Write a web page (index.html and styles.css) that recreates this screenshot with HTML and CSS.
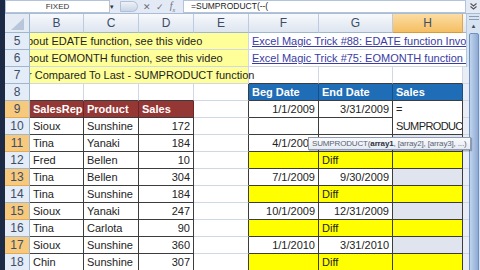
FILE: index.html
```
<!DOCTYPE html>
<html lang="en">
<head>
    <meta charset="UTF-8">
    <meta name="viewport" content="width=device-width, initial-scale=1.0">
    <title>SUMPRODUCT - sales by quarter</title>
    <link rel="stylesheet" href="styles.css">
</head>
<body>
<div class="app">
    <!-- formula bar -->
    <div class="formula-bar">
        <div class="name-box">FIXED</div>
        <div class="nb-arrow">&#9662;</div>
        <div class="fx-buttons">
            <span class="grip"></span>
            <span class="fx-btn">&#10005;</span>
            <span class="fx-btn">&#10003;</span>
            <span class="fx-btn fx">f<sub>x</sub></span>
        </div>
        <div class="formula">=SUMPRODUCT(--(</div>
        <div class="fb-expand">
            <svg width="9" height="9" viewBox="0 0 9 9"><path d="M1.5 1.5 L4.5 4 L7.5 1.5 M1.5 4.5 L4.5 7 L7.5 4.5" fill="none" stroke="#555" stroke-width="1.1"/></svg>
        </div>
    </div>

    <div class="workspace">
        <div class="sheet">
            <!-- column headers -->
            <div class="corner"><svg width="24" height="18" viewBox="0 0 24 18"><path d="M6 16 L19 16 L19 4 Z" fill="#b7c6da"/></svg></div>
            <div class="ch">B</div>
            <div class="ch">C</div>
            <div class="ch">D</div>
            <div class="ch">E</div>
            <div class="ch">F</div>
            <div class="ch">G</div>
            <div class="ch on">H</div>
            <div class="ch edge"></div>

            <!-- 5 -->
            <div class="rh">5</div>
            <div class="cell note">bout EDATE function, see this video</div>
            <div class="cell wide link">Excel Magic Trick #88: EDATE function Invoice Due Date</div>
            <!-- 6 -->
            <div class="rh">6</div>
            <div class="cell note">bout EOMONTH function, see this video</div>
            <div class="cell wide link">Excel Magic Trick #75: EOMONTH function Invoice</div>
            <!-- 7 -->
            <div class="rh">7</div>
            <div class="cell note spill">r Compared To Last - SUMPRODUCT function</div>
            <div class="cell tb-b"></div>
            <div class="cell tb-b"></div>
            <div class="cell tb-b"></div>
            <div class="cell edge"></div>
            <!-- 8 -->
            <div class="rh">8</div>
            <div class="cell tb-b"></div>
            <div class="cell tb-b"></div>
            <div class="cell tb-b"></div>
            <div class="cell tb-r"></div>
            <div class="cell blue">Beg Date</div>
            <div class="cell blue">End Date</div>
            <div class="cell blue">Sales</div>
            <div class="cell edge"></div>
            <!-- 9 -->
            <div class="rh on">9</div>
            <div class="cell red">SalesRep</div>
            <div class="cell red">Product</div>
            <div class="cell red">Sales</div>
            <div class="cell tb-r"></div>
            <div class="cell tb num">1/1/2009</div>
            <div class="cell tb num">3/31/2009</div>
            <div class="cell tb edit">=<br>SUMPRODUC</div>
            <div class="cell edge"></div>
            <!-- 10 -->
            <div class="rh">10</div>
            <div class="cell tb">Sioux</div>
            <div class="cell tb">Sunshine</div>
            <div class="cell tb num">172</div>
            <div class="cell tb-r"></div>
            <div class="cell tb"></div>
            <div class="cell tb"></div>
            <div class="cell edge"></div>
            <!-- 11 -->
            <div class="rh on">11</div>
            <div class="cell tb">Tina</div>
            <div class="cell tb">Yanaki</div>
            <div class="cell tb num">184</div>
            <div class="cell tb-r"></div>
            <div class="cell tb num">4/1/2009</div>
            <div class="cell tb num"></div>
            <div class="cell tb pick"></div>
            <div class="cell edge"></div>
            <!-- 12 -->
            <div class="rh">12</div>
            <div class="cell tb">Fred</div>
            <div class="cell tb">Bellen</div>
            <div class="cell tb num">10</div>
            <div class="cell tb-r"></div>
            <div class="cell tb diff"></div>
            <div class="cell tb diff">Diff</div>
            <div class="cell tb diff"></div>
            <div class="cell edge"></div>
            <!-- 13 -->
            <div class="rh on">13</div>
            <div class="cell tb">Tina</div>
            <div class="cell tb">Bellen</div>
            <div class="cell tb num">304</div>
            <div class="cell tb-r"></div>
            <div class="cell tb num">7/1/2009</div>
            <div class="cell tb num">9/30/2009</div>
            <div class="cell tb pick"></div>
            <div class="cell edge"></div>
            <!-- 14 -->
            <div class="rh">14</div>
            <div class="cell tb">Tina</div>
            <div class="cell tb">Sunshine</div>
            <div class="cell tb num">184</div>
            <div class="cell tb-r"></div>
            <div class="cell tb diff"></div>
            <div class="cell tb diff">Diff</div>
            <div class="cell tb diff"></div>
            <div class="cell edge"></div>
            <!-- 15 -->
            <div class="rh on">15</div>
            <div class="cell tb">Sioux</div>
            <div class="cell tb">Yanaki</div>
            <div class="cell tb num">247</div>
            <div class="cell tb-r"></div>
            <div class="cell tb num">10/1/2009</div>
            <div class="cell tb num">12/31/2009</div>
            <div class="cell tb pick"></div>
            <div class="cell edge"></div>
            <!-- 16 -->
            <div class="rh">16</div>
            <div class="cell tb">Tina</div>
            <div class="cell tb">Carlota</div>
            <div class="cell tb num">90</div>
            <div class="cell tb-r"></div>
            <div class="cell tb diff"></div>
            <div class="cell tb diff">Diff</div>
            <div class="cell tb diff"></div>
            <div class="cell edge"></div>
            <!-- 17 -->
            <div class="rh on">17</div>
            <div class="cell tb">Sioux</div>
            <div class="cell tb">Sunshine</div>
            <div class="cell tb num">360</div>
            <div class="cell tb-r"></div>
            <div class="cell tb num">1/1/2010</div>
            <div class="cell tb num">3/31/2010</div>
            <div class="cell tb pick"></div>
            <div class="cell edge"></div>
            <!-- 18 -->
            <div class="rh">18</div>
            <div class="cell tb">Chin</div>
            <div class="cell tb">Sunshine</div>
            <div class="cell tb num">307</div>
            <div class="cell tb-r"></div>
            <div class="cell tb diff"></div>
            <div class="cell tb diff">Diff</div>
            <div class="cell tb diff"></div>
            <div class="cell edge"></div>

            <!-- function tooltip over the grid -->
            <div class="tip">SUMPRODUCT(<b>array1</b>, [array2], [array3], ...)</div>
        </div>

        <div class="vscroll">
            <div class="vs-split"></div>
            <div class="vs-up">&#9650;</div>
            <div class="vs-thumb"></div>
        </div>
    </div>
</div>
</body>
</html>
```
FILE: styles.css
```
* {
    box-sizing: border-box;
}

body {
    margin: 0;
    background-color: #1d2a45;
    font-family: 'Liberation Sans', Arial, sans-serif;
    overflow: hidden;
}

.app {
    margin-left: 5px;
    width: 475px;
    height: 270px;
    display: flex;
    flex-direction: column;
    background-color: #ffffff;
}

/* formula bar */
.formula-bar {
    height: 14px;
    display: flex;
    background-color: #e3eaf5;
    border-bottom: 1px solid #a9bcd6;
}

.name-box {
    width: 105px;
    background-color: #ffffff;
    border: 1px solid #b3c3d9;
    font-size: 8px;
    line-height: 11px;
    text-align: center;
    color: #333333;
}

.nb-arrow {
    width: 8px;
    font-size: 7px;
    line-height: 13px;
    color: #333333;
}

.fx-buttons {
    width: 65px;
    display: flex;
    align-items: center;
    gap: 4px;
    padding-left: 2px;
}

.grip {
    width: 18px;
    height: 11px;
    border-radius: 0 6px 6px 0;
    background: linear-gradient(#eef2f8, #c9d5e6);
    border: 1px solid #b1c0d4;
}

.fx-btn {
    font-size: 9px;
    color: #6a6f78;
    width: 9px;
    text-align: center;
}

.fx {
    font-family: 'Liberation Serif', serif;
    font-style: italic;
    font-size: 10px;
}

.fx sub {
    font-size: 6px;
}

.formula {
    flex: 1;
    background-color: #ffffff;
    border: 1px solid #b3c3d9;
    font-size: 8.5px;
    line-height: 11px;
    padding-left: 7px;
    color: #222222;
}

.fb-expand {
    width: 14px;
    display: flex;
    align-items: center;
    justify-content: center;
}

/* sheet */
.workspace {
    flex: 1;
    display: flex;
    min-height: 0;
}

.sheet {
    position: relative;
    width: 461px;
    display: grid;
    grid-template-columns: 25px 54px 55px 55px 55px 70px 74px 70px 3px;
    grid-template-rows: 19px;
    grid-auto-rows: 17px;
}

.corner {
    background-color: #e4ebf5;
    border-right: 1px solid #9eb6ce;
    border-bottom: 1px solid #9eb6ce;
}

.ch {
    background: linear-gradient(#f7f9fc, #dde5f0);
    border-right: 1px solid #bccbdd;
    border-bottom: 1px solid #9eb6ce;
    text-align: center;
    font-size: 12px;
    line-height: 18px;
    color: #3d4d66;
}

.ch.on {
    background: linear-gradient(#fbdda3, #f5bf63);
    border-right-color: #e0a650;
    border-bottom-color: #d99a3e;
}

.ch.edge {
    border-right: none;
}

.rh {
    background-color: #e4ecf7;
    border-right: 1px solid #9eb6ce;
    border-bottom: 1px solid #9eb6ce;
    text-align: center;
    font-size: 12px;
    line-height: 16px;
    color: #3d4d66;
}

.rh.on {
    background-color: #f7c97c;
    border-bottom-color: #e2a957;
}

.cell {
    border-right: 1px solid #d0d7e5;
    border-bottom: 1px solid #d0d7e5;
    padding: 0 3px;
    font-size: 11px;
    line-height: 16px;
    white-space: nowrap;
    overflow: hidden;
    color: #232323;
}

.cell.edge {
    border-right: none;
    background-color: #e9eef6;
}

.note {
    grid-column: span 4;
    background-color: #ffff99;
    text-indent: -6px;
}

.note.spill {
    overflow: visible;
    clip-path: inset(0 -200px 0 0);
    text-indent: -5px;
}

.wide {
    grid-column: span 4;
    border-right: none;
}

.link {
    color: #3a3ca4;
    text-decoration: underline;
}

.num {
    text-align: right;
}

.tb {
    border-right-color: #3c3c3c;
    border-bottom-color: #3c3c3c;
}

.tb-r {
    border-right-color: #3c3c3c;
}

.tb-b {
    border-bottom-color: #3c3c3c;
}

.red {
    background-color: #953735;
    color: #ffffff;
    font-weight: bold;
    border-right-color: #6e2624;
    border-bottom-color: #3c3c3c;
}

.blue {
    background-color: #1f6db6;
    color: #ffffff;
    font-weight: bold;
    border-right-color: #184f86;
    border-bottom-color: #3c3c3c;
}

.diff {
    background-color: #ffff00;
}

.pick {
    background-color: #dfe4ee;
}

.edit {
    grid-row: span 2;
    background-color: #ffffff;
    padding-right: 0;
    line-height: 17px;
    letter-spacing: -0.6px;
}

.tip {
    position: absolute;
    left: 303px;
    top: 123px;
    z-index: 2;
    width: 163px;
    height: 13px;
    padding: 0 3px;
    background: linear-gradient(#f9fafc, #e6ebf3);
    border: 1px solid #8e9cb2;
    box-shadow: 1px 1px 1px rgba(0, 0, 0, 0.25);
    font-size: 8px;
    line-height: 11px;
    letter-spacing: -0.15px;
    white-space: nowrap;
    color: #596374;
}

.tip b {
    color: #2c3340;
}

/* scroll bar */
.vscroll {
    width: 14px;
    display: flex;
    flex-direction: column;
    align-items: center;
    background-color: #d8e3f2;
    border-left: 1px solid #b5c7de;
}

.vs-split {
    width: 10px;
    height: 4px;
    margin-top: 2px;
    border-top: 1px solid #8a9bb3;
    border-bottom: 1px solid #8a9bb3;
}

.vs-up {
    height: 13px;
    font-size: 6px;
    line-height: 13px;
    color: #3f4d63;
}

.vs-thumb {
    flex: 1;
    width: 10px;
    margin-bottom: -2px;
    background: linear-gradient(90deg, #c2d4ec, #8eaad4);
    border: 1px solid #6e8fc0;
    border-radius: 2px;
}
```
